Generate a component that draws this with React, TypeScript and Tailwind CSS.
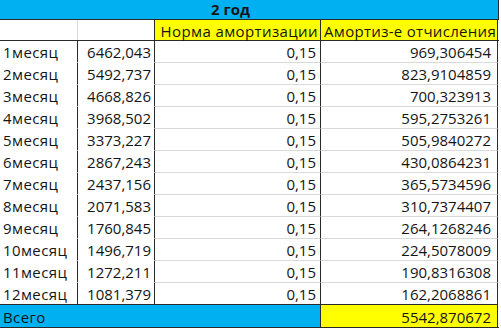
import React from 'react';

const rows = [
  ['1месяц', '6462,043', '969,306454'],
  ['2месяц', '5492,737', '823,9104859'],
  ['3месяц', '4668,826', '700,323913'],
  ['4месяц', '3968,502', '595,2753261'],
  ['5месяц', '3373,227', '505,9840272'],
  ['6месяц', '2867,243', '430,0864231'],
  ['7месяц', '2437,156', '365,5734596'],
  ['8месяц', '2071,583', '310,7374407'],
  ['9месяц', '1760,845', '264,1268246'],
  ['10месяц', '1496,719', '224,5078009'],
  ['11месяц', '1272,211', '190,8316308'],
  ['12месяц', '1081,379', '162,2068861'],
];

export default function App() {
  return (
    <div className="w-[501px] h-[330px] bg-white overflow-hidden text-[15px] leading-none text-[#151515] font-['Open_Sans',sans-serif]">
      {/* title row */}
      <div className="flex h-[20px] w-[499px] bg-[#00b0f0] border-b border-r border-[#2a2a2a]">
        <div className="flex-1 flex items-center pl-[211px] font-bold">2 год</div>
      </div>

      {/* column headers */}
      <div className="flex h-[21px] w-[499px] border-b border-[#2a2a2a]">
        <div className="w-[78px] border-r border-[#d9d9d9]" />
        <div className="w-[77px] border-r border-[#2a2a2a]" />
        <div className="w-[166px] flex items-center justify-end pt-[2px] pr-[2px] tracking-[0.4px] bg-[#ffff00] border-r border-[#2a2a2a] whitespace-nowrap">
          Норма амортизации
        </div>
        <div className="w-[177px] flex items-center justify-end pt-[2px] pr-[1px] tracking-[0.3px] bg-[#ffff00] border-r border-[#2a2a2a] whitespace-nowrap">
          Амортиз-е отчисления
        </div>
      </div>

      {/* months */}
      {rows.map(([name, value, amount], i) => {
        const last = i === rows.length - 1;
        return (
          <div key={name} className="flex h-[22px] w-[499px]">
            <div className={`w-[78px] flex items-center pt-[2px] pl-[3px] tracking-[0.4px] border-r border-[#2a2a2a] border-b ${last ? 'border-b-[#2a2a2a]' : 'border-b-white'}`}>
              {name}
            </div>
            <div className={`w-[77px] flex items-center justify-end pt-[2px] pr-[3px] border-r border-[#2a2a2a] border-b ${last ? 'border-b-[#2a2a2a]' : 'border-b-white'}`}>
              {value}
            </div>
            <div className={`w-[166px] flex items-center justify-end pt-[2px] pr-[4px] border-r border-[#2a2a2a] border-b ${last ? 'border-b-[#2a2a2a]' : 'border-b-[#d9d9d9]'}`}>
              0,15
            </div>
            <div className={`w-[177px] flex items-center justify-end pt-[2px] pr-[6px] border-r border-[#2a2a2a] border-b ${last ? 'border-b-[#2a2a2a]' : 'border-b-[#d9d9d9]'}`}>
              {amount}
            </div>
          </div>
        );
      })}

      {/* total */}
      <div className="flex h-[23px] w-[499px] border-b border-[#2a2a2a]">
        <div className="w-[321px] flex items-center pt-[2px] pl-[3px] tracking-[0.4px] bg-[#00b0f0] border-r border-[#2a2a2a]">Всего</div>
        <div className="w-[177px] flex items-center justify-end pt-[2px] pr-[6px] bg-[#ffff00] border-r border-[#2a2a2a]">
          5542,870672
        </div>
      </div>
    </div>
  );
}
